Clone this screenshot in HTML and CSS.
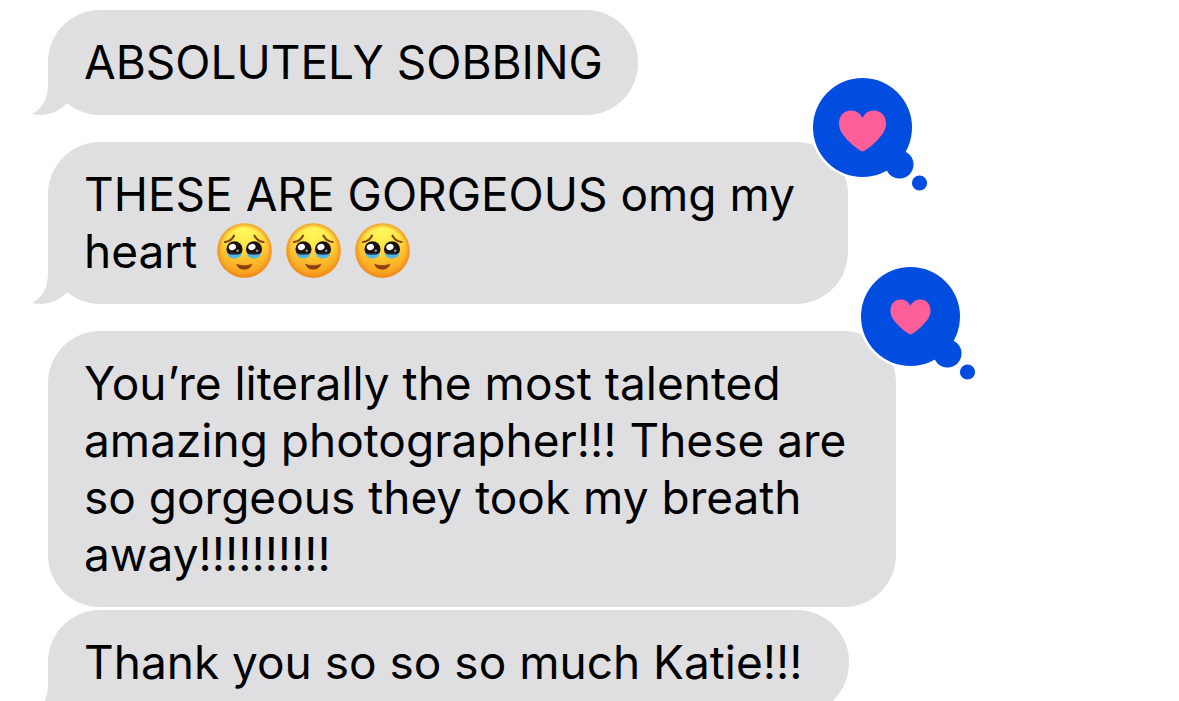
FILE: index.html
```html
<!DOCTYPE html>
<html lang="en">
<head>
  <meta charset="utf-8">
  <meta name="viewport" content="width=device-width, initial-scale=1.0">
  <title>Messages</title>
  <link rel="stylesheet" href="styles.css">
</head>
<body>
  <!-- shared shapes -->
  <svg class="shapes" aria-hidden="true">
    <defs>
      <radialGradient id="face-fill" cx="50%" cy="12%" r="90%">
        <stop offset="0" stop-color="#fffa5e"/>
        <stop offset="0.35" stop-color="#ffe548"/>
        <stop offset="0.65" stop-color="#ffbe2c"/>
        <stop offset="1" stop-color="#f7951a"/>
      </radialGradient>
      <radialGradient id="face-edge">
        <stop offset="0.82" stop-color="#ee8a1a" stop-opacity="0"/>
        <stop offset="1" stop-color="#e98320" stop-opacity="0.75"/>
      </radialGradient>
      <symbol id="tail" viewBox="0 0 40 55">
        <path d="M16 0V24C16 39 10 49 0 54C13 57 26 53 35 43L40 20Z"/>
      </symbol>
      <symbol id="heart" viewBox="0 0 48 42">
        <path d="M24 41.5C22.5 41.5 16 37 10.500 31.500C4 25 .5 20 .5 13.500C.5 5.500 6 .5 12.500 .5C18 .5 22 3.500 24 8C26 3.500 30 .5 35.500 .5C42 .5 47.500 5.500 47.500 13.500C47.500 20 44 25 37.500 31.500C32 37 25.500 41.500 24 41.500Z"/>
      </symbol>
      <symbol id="eye" viewBox="0 0 17 18">
        <circle cx="8.500" cy="8.200" r="8" fill="#1b1210"/>
        <path d="M1.500 12C4 13.500 6 14 8.500 14S13 13.500 15.500 12C15.500 15.500 12.500 17.500 8.500 17.500S1.500 15.500 1.500 12Z" fill="#52b8ea"/>
        <path d="M4.500 12C7 13 10 13 12.500 12L11.500 14H5.500Z" fill="#35597c"/>
        <ellipse cx="6.400" cy="6" rx="3.700" ry="3.100" fill="#fff" transform="rotate(-25 6.400 6)"/>
        <circle cx="11.700" cy="9.800" r="1.300" fill="#8d9aa5"/>
      </symbol>
      <symbol id="face" viewBox="0 0 55 55">
        <circle cx="27.500" cy="27.500" r="27.200" fill="url(#face-fill)"/>
        <circle cx="27.500" cy="27.500" r="27.200" fill="url(#face-edge)"/>
        <path d="M8 19C12 18.500 15 16.500 17 12.700M37.500 12.700C39.500 16.500 42.500 18.500 46.500 19" fill="none" stroke="#7d430c" stroke-width="2.100" stroke-linecap="round"/>
        <use href="#eye" x="9" y="18" width="17" height="18"/>
        <use href="#eye" x="28.500" y="18" width="17" height="18"/>
        <path d="M19.500 41C23.500 43 31 43 35 41C34 44.500 31 46.300 27.200 46.300S20.500 44.500 19.500 41Z" fill="#8a3f10" stroke="#8a3f10" stroke-width=".6" stroke-linejoin="round"/>
      </symbol>
    </defs>
  </svg>

  <main class="thread">
    <div class="bubble has-tail">
      <p>ABSOLUTELY SOBBING</p>
      <svg class="tail" aria-hidden="true"><use href="#tail"/></svg>
    </div>

    <div class="bubble bubble-medium has-tail">
      <p>THESE ARE GORGEOUS omg my heart <span class="faces"><svg class="emoji" role="img" aria-label="Face holding back tears"><use href="#face"/></svg><svg class="emoji" role="img" aria-label="Face holding back tears"><use href="#face"/></svg><svg class="emoji" role="img" aria-label="Face holding back tears"><use href="#face"/></svg></span></p>
      <svg class="tail" aria-hidden="true"><use href="#tail"/></svg>
      <svg class="reaction" viewBox="0 0 120 120" role="img" aria-label="Loved">
        <circle class="ring" cx="52.500" cy="52.500" r="52"/>
        <g class="cloud">
          <circle cx="52.500" cy="52.500" r="49.500"/>
          <circle cx="89.500" cy="89.500" r="14"/>
          <circle cx="109.500" cy="108" r="7.600"/>
        </g>
        <use class="heart" href="#heart" x="28.500" y="35" width="48" height="42"/>
      </svg>
    </div>

    <div class="bubble bubble-large">
      <p>You’re literally the most talented amazing photographer!!! These are so gorgeous they took my breath away!!!!!!!!!!</p>
      <svg class="reaction" viewBox="0 0 120 120" role="img" aria-label="Loved">
        <circle class="ring" cx="52.500" cy="52.500" r="52"/>
        <g class="cloud">
          <circle cx="52.500" cy="52.500" r="49.500"/>
          <circle cx="89.500" cy="89.500" r="14"/>
          <circle cx="109.500" cy="108" r="7.600"/>
        </g>
        <use class="heart" href="#heart" x="32" y="35" width="41" height="36"/>
      </svg>
    </div>

    <div class="bubble bubble-roomy has-tail">
      <p>Thank you so so so much Katie!!!</p>
      <svg class="tail" aria-hidden="true"><use href="#tail"/></svg>
    </div>
  </main>
</body>
</html>
```

FILE: styles.css
```css
* {
  box-sizing: border-box;
}
body {
  margin: 0;
  background-color: #ffffff;
  color: #000000;
  font-family: Inter, "Liberation Sans", sans-serif;
  font-size: 46px;
  line-height: 57px;
}
p {
  margin: 0;
}
.shapes {
  position: absolute;
  width: 0;
  height: 0;
}
.thread {
  display: flex;
  flex-direction: column;
  align-items: flex-start;
  gap: 3px;
  height: 100vh;
  padding: 10px 48px 0;
  overflow: hidden;
}
.bubble {
  position: relative;
  flex-shrink: 0;
  max-width: 100%;
  padding: 24px 35px 24px 36px;
  border-radius: 52px;
  background-color: #dfdfe1;
}
.bubble.has-tail {
  margin-bottom: 24px;
}
.bubble-medium {
  max-width: 800px;
}
.bubble-large {
  max-width: 848px;
}
.bubble-roomy {
  padding-right: 46px;
}
.tail {
  position: absolute;
  left: -16px;
  bottom: 0;
  width: 40px;
  height: 55px;
  fill: #dfdfe1;
}
.faces {
  display: inline-flex;
  gap: 14px;
  height: 46px;
  margin-left: 7px;
  vertical-align: -10px;
  align-items: flex-end;
}
.emoji {
  width: 55px;
  height: 55px;
}

/* heart reaction on the top right corner */
.reaction {
  position: absolute;
  top: -67px;
  right: -82px;
  width: 120px;
  height: 120px;
}
.ring {
  fill: #ffffff;
}
.cloud {
  fill: #004de0;
}
.heart {
  fill: #ff5f98;
}
```
